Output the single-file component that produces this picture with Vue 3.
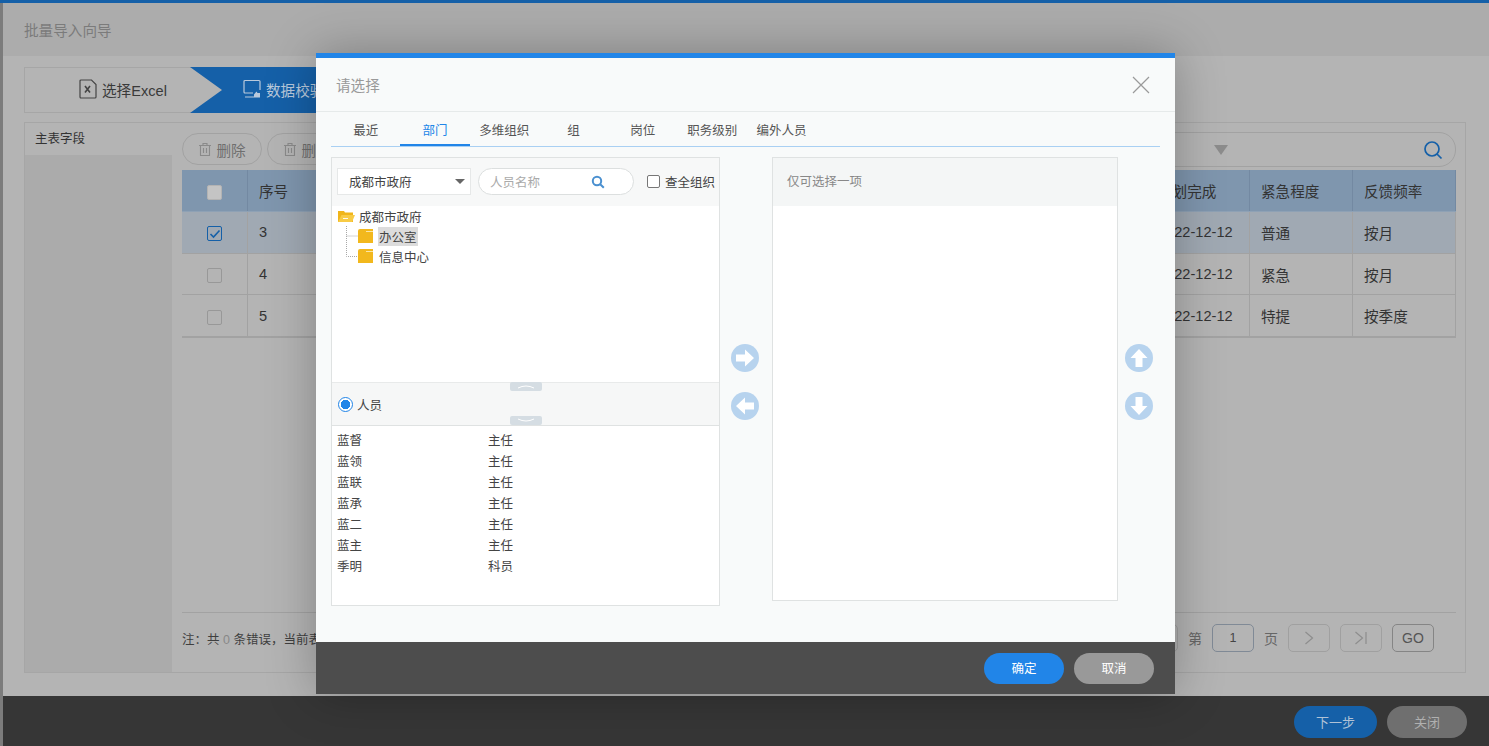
<script setup>
const rows = [
  { id: 3, date: '2022-12-12', level: '普通', freq: '按月', checked: true },
  { id: 4, date: '2022-12-12', level: '紧急', freq: '按月', checked: false },
  { id: 5, date: '2022-12-12', level: '特提', freq: '按季度', checked: false },
]
const tabs = ['最近', '部门', '多维组织', '组', '岗位', '职务级别', '编外人员']
const people = [
  ['蓝督', '主任'],
  ['蓝领', '主任'],
  ['蓝联', '主任'],
  ['蓝承', '主任'],
  ['蓝二', '主任'],
  ['蓝主', '主任'],
  ['季明', '科员'],
]
const noteStart = '注\uFF1A共'
const noteEnd = '条错误\uFF0C当前表单可继续导入'
</script>

<template>
  <div class="page">
    <div class="window">
      <header class="win-head">批量导入向导</header>

      <main class="win-body">
        <div class="steps">
          <div class="step first">
            <svg class="step-icon" width="18" height="20" viewBox="0 0 18 20" fill="none" stroke="#444" stroke-width="1.2">
              <path d="M1 2a1 1 0 0 1 1-1h10.500L17 5.500V18a1 1 0 0 1-1 1H2a1 1 0 0 1-1-1z" />
              <path d="M6 7l5 6.500M11 7l-5 6.500" stroke-width="1.600" />
            </svg>
            <span>选择Excel</span>
          </div>
          <div class="step active">
            <svg class="step-icon" width="18" height="20" viewBox="0 0 18 20" fill="none" stroke="#b9c9dc" stroke-width="1.200">
              <path d="M10 14H2a1 1 0 0 1-1-1V2.500a1 1 0 0 1 1-1h14a1 1 0 0 1 1 1V11" />
              <path d="M2 18h9" />
              <path d="M11 18.500v-3l2.500-3 1 1.500H17v4.500z" fill="#b9c9dc" stroke="none" />
            </svg>
            <span>数据校验</span>
          </div>
        </div>

        <section class="panel">
          <aside class="aside">
            <div class="aside-title">主表字段</div>
            <div class="aside-fill"></div>
          </aside>

          <div class="content">
            <div class="toolbar">
              <button v-for="n in 2" :key="n" class="pill-btn" type="button">
                <svg width="14" height="15" viewBox="0 0 14 15" fill="none" stroke="#8a8a8a" stroke-width="1.1">
                  <path d="M1 3.500h12M5 3.500v-2h4v2M2.500 3.500v10h9v-10M5.500 6v5M8.500 6v5" />
                </svg>
                <span>删除</span>
              </button>
              <div class="search-pill">
                <span class="search-caret"></span>
                <svg width="20" height="20" viewBox="0 0 20 20" fill="none" stroke="#1560a8" stroke-width="1.700">
                  <circle cx="9" cy="9" r="7" />
                  <path d="M14 14l4.500 4.500" />
                </svg>
              </div>
            </div>

            <div class="table">
              <div class="tr head">
                <div class="td check"><span class="box head-box"></span></div>
                <div class="td grow">序号</div>
                <div class="td date">计划完成</div>
                <div class="td level">紧急程度</div>
                <div class="td freq">反馈频率</div>
              </div>
              <div v-for="row in rows" :key="row.id" class="tr body-row" :class="{ picked: row.checked }">
                <div class="td check">
                  <span class="box" :class="{ on: row.checked }">
                    <svg v-if="row.checked" width="12" height="10" viewBox="0 0 12 10" fill="none" stroke="#1560a8" stroke-width="1.600">
                      <path d="M1.500 5l3 3 6-6.500" />
                    </svg>
                  </span>
                </div>
                <div class="td grow">{{ row.id }}</div>
                <div class="td date">{{ row.date }}</div>
                <div class="td level">{{ row.level }}</div>
                <div class="td freq">{{ row.freq }}</div>
              </div>
            </div>

            <div class="table-foot">
              <p class="note">{{ noteStart }} <em>0</em> {{ noteEnd }}</p>
              <div class="pager">
                <span class="page-btn edge"></span>
                <span class="page-label">第</span>
                <span class="page-input">1</span>
                <span class="page-label">页</span>
                <span class="page-btn">
                  <svg width="12" height="14" viewBox="0 0 12 14" fill="none" stroke="#8d8d8d" stroke-width="1.200"><path d="M2.500 1l7 6-7 6" /></svg>
                </span>
                <span class="page-btn">
                  <svg width="14" height="14" viewBox="0 0 14 14" fill="none" stroke="#8d8d8d" stroke-width="1.200"><path d="M1.500 1l7 6-7 6M12 1v12" /></svg>
                </span>
                <span class="page-btn go">GO</span>
              </div>
            </div>
          </div>
        </section>
      </main>

      <footer class="win-foot">
        <button class="foot-btn next" type="button">下一步</button>
        <button class="foot-btn shut" type="button">关闭</button>
      </footer>
    </div>

    <div class="modal">
      <div class="modal-head">
        <span>请选择</span>
        <svg width="18" height="18" viewBox="0 0 18 18" fill="none" stroke="#9a9a9a" stroke-width="1.200">
          <path d="M1 1l16 16M17 1L1 17" />
        </svg>
      </div>

      <div class="tabs">
        <span v-for="tab in tabs" :key="tab" class="tab" :class="{ current: tab === '部门' }">{{ tab }}</span>
      </div>

      <div class="modal-body">
        <div class="picker">
          <div class="picker-top">
            <div class="select">
              <span>成都市政府</span>
              <i class="caret"></i>
            </div>
            <div class="name-input">
              <span>人员名称</span>
              <svg width="14" height="14" viewBox="0 0 14 14" fill="none" stroke="#4a90d0" stroke-width="2">
                <circle cx="6" cy="6" r="4.200" />
                <path d="M9.200 9.200l3.600 3.600" />
              </svg>
            </div>
            <label class="all-org"><span class="mini-box"></span>查全组织</label>
          </div>

          <div class="tree">
            <div class="node">
              <svg width="17" height="13" viewBox="0 0 17 13">
                <path d="M0 1h6l1 1.500h8V12H0z" fill="#f0b51a" />
                <path d="M3.500 5H17l-3 7H0z" fill="#f8cb45" />
                <path d="M5 8.500h5" stroke="#fff" stroke-width="0.900" />
              </svg>
              <span>成都市政府</span>
            </div>
            <div class="node child">
              <svg class="link" width="12" height="20" viewBox="0 0 12 20" fill="none" stroke="#a8a8a8" stroke-dasharray="1 1">
                <path d="M.5 0v20M.5 10H12" />
              </svg>
              <svg width="15" height="14" viewBox="0 0 15 14">
                <path d="M0 2a2 2 0 0 1 2-2h13v14H0z" fill="#f2b81d" />
                <path d="M8 2.500h7" stroke="#fbe6a8" stroke-width="1" />
              </svg>
              <span class="label chosen">办公室</span>
            </div>
            <div class="node child">
              <svg class="link" width="12" height="20" viewBox="0 0 12 20" fill="none" stroke="#a8a8a8" stroke-dasharray="1 1">
                <path d="M.5 0v10.500H12" />
              </svg>
              <svg width="15" height="14" viewBox="0 0 15 14">
                <path d="M0 2a2 2 0 0 1 2-2h13v14H0z" fill="#f2b81d" />
                <path d="M8 2.500h7" stroke="#fbe6a8" stroke-width="1" />
              </svg>
              <span class="label">信息中心</span>
            </div>
          </div>

          <div class="radio-bar">
            <span class="grip top">
              <svg width="32" height="9" viewBox="0 0 32 9" fill="none" stroke="#fff"><path d="M8 6q8-4 16 0" /></svg>
            </span>
            <span class="radio"></span>
            <span>人员</span>
            <span class="grip bottom">
              <svg width="32" height="9" viewBox="0 0 32 9" fill="none" stroke="#fff"><path d="M8 3q8 4 16 0" /></svg>
            </span>
          </div>

          <div class="people">
            <div v-for="p in people" :key="p[0]" class="person">
              <span class="person-name">{{ p[0] }}</span>
              <span>{{ p[1] }}</span>
            </div>
          </div>
        </div>

        <div class="arrows mid">
          <svg class="arrow" width="28" height="28" viewBox="0 0 28 28"><circle cx="14" cy="14" r="14" fill="#b7d3ee" /><path d="M5 10.500h9v-5l9 8.500-9 8.500v-5H5z" fill="#fff" /></svg>
          <svg class="arrow to-left" width="28" height="28" viewBox="0 0 28 28"><circle cx="14" cy="14" r="14" fill="#b7d3ee" /><path d="M5 10.500h9v-5l9 8.500-9 8.500v-5H5z" fill="#fff" /></svg>
        </div>

        <div class="chosen-panel">
          <div class="chosen-head">仅可选择一项</div>
        </div>

        <div class="arrows side">
          <svg class="arrow to-up" width="28" height="28" viewBox="0 0 28 28"><circle cx="14" cy="14" r="14" fill="#b7d3ee" /><path d="M5 10.500h9v-5l9 8.500-9 8.500v-5H5z" fill="#fff" /></svg>
          <svg class="arrow to-down" width="28" height="28" viewBox="0 0 28 28"><circle cx="14" cy="14" r="14" fill="#b7d3ee" /><path d="M5 10.500h9v-5l9 8.500-9 8.500v-5H5z" fill="#fff" /></svg>
        </div>
      </div>

      <div class="modal-foot">
        <button class="modal-btn ok" type="button">确定</button>
        <button class="modal-btn cancel" type="button">取消</button>
      </div>
    </div>
  </div>
</template>

<style>
html,
body {
  margin: 0;
  background: #7c7c7c;
  overflow: hidden;
}
</style>

<style scoped>
.page {
  position: relative;
  width: 1489px;
  height: 746px;
  overflow: hidden;
  box-sizing: border-box;
  padding-left: 3px;
  border-top: 3px solid #1560a8;
  font-family: "Liberation Sans", "Noto Sans CJK SC", sans-serif;
  font-size: 14.6px;
  color: #333;
}

.window {
  display: flex;
  flex-direction: column;
  height: 743px;
  background: #b4b4b4;
}

.win-head {
  flex: none;
  height: 53px;
  box-sizing: border-box;
  padding: 18px 0 0 21px;
  background: #acacac;
  color: #7b7b7b;
  line-height: 20px;
}

.win-body {
  flex: 1;
  display: flex;
  flex-direction: column;
  padding: 11px 23px 23px 21px;
  min-height: 0;
}

.steps {
  flex: none;
  display: flex;
  height: 46px;
}

.step {
  display: flex;
  align-items: center;
  box-sizing: border-box;
  height: 46px;
  padding-bottom: 2px;
}

.step.first {
  flex: none;
  width: 198px;
  padding-left: 54px;
  border: 1px solid #a6a6a6;
  border-right: 0;
  color: #3a3a3a;
}

.step.active {
  flex: none;
  width: 500px;
  margin-left: -32px;
  padding-left: 53px;
  background: #1560a8;
  color: #b9c9dc;
  clip-path: polygon(0 0, 100% 0, 100% 100%, 0 100%, 32px 50%);
}

.step-icon {
  flex: none;
  margin-right: 5px;
}

.panel {
  flex: 1;
  display: flex;
  margin-top: 9px;
  border: 1px solid #a6a6a6;
  min-height: 0;
}

.aside {
  flex: none;
  display: flex;
  flex-direction: column;
  width: 147px;
}

.aside-title {
  flex: none;
  height: 32px;
  box-sizing: border-box;
  padding: 7px 0 0 10px;
  font-size: 12.5px;
  line-height: 18px;
}

.aside-fill {
  flex: 1;
  background: #ababab;
}

.content {
  flex: 1;
  display: flex;
  flex-direction: column;
  min-width: 0;
  padding: 10px 9px 0 10px;
}

.toolbar {
  flex: none;
  display: flex;
  gap: 5px;
  height: 32px;
}

.pill-btn {
  display: flex;
  align-items: center;
  justify-content: center;
  gap: 4px;
  width: 80px;
  height: 32px;
  padding: 0;
  border: 1px solid #a2a2a2;
  border-radius: 16px;
  background: transparent;
  color: #6f6f6f;
  font: inherit;
}

.search-pill {
  flex: 1;
  display: flex;
  align-items: center;
  justify-content: flex-end;
  gap: 195px;
  height: 33px;
  margin-top: -1px;
  margin-left: 40px;
  padding-right: 12px;
  border: 1px solid #a2a2a2;
  border-radius: 17px;
}

.search-caret {
  width: 0;
  height: 0;
  border-left: 7px solid transparent;
  border-right: 7px solid transparent;
  border-top: 10px solid #8c8c8c;
}

.table {
  flex: none;
  margin-top: 5px;
  border-bottom: 1px solid #a2a2a2;
}

.tr {
  display: flex;
  height: 42px;
  border-bottom: 1px solid #a2a2a2;
  box-sizing: border-box;
}

.tr.body-row {
  height: 41.7px;
}

.tr.head {
  background: #7f96ae;
  border-bottom-color: #8ea1b5;
}

.tr.picked {
  background: #a0a9b3;
}

.td {
  display: flex;
  align-items: center;
  box-sizing: border-box;
  padding-left: 11px;
  border-right: 1px solid #a2a2a2;
  color: #333;
}

.tr.head .td {
  border-right-color: #7389a2;
}

.td.check {
  flex: none;
  width: 66px;
  justify-content: center;
  padding: 0;
}

.td.grow {
  flex: 1;
}

.td.date {
  flex: none;
  width: 102px;
  padding-left: 10px;
}

.td.level,
.td.freq {
  flex: none;
  width: 103px;
}

.box {
  display: flex;
  align-items: center;
  justify-content: center;
  box-sizing: border-box;
  width: 15px;
  height: 15px;
  margin-top: 3px;
  border: 1px solid #989898;
  border-radius: 2px;
}

.box.head-box {
  margin-top: 4px;
  background: #c4c4c4;
  border-color: #b3b3b3;
}

.box.on {
  border-color: #1560a8;
}

.table-foot {
  flex: none;
  display: flex;
  align-items: center;
  justify-content: space-between;
  height: 50px;
  margin-top: 274px;
  border-top: 1px solid #a2a2a2;
}

.note {
  margin: 0;
  font-size: 12.5px;
  color: #3f3f3f;
}

.note em {
  font-style: normal;
  color: #888;
}

.pager {
  display: flex;
  align-items: center;
  gap: 10px;
  padding-right: 22px;
  font-size: 13px;
}

.page-label {
  color: #666;
  font-size: 14px;
}

.page-input,
.page-btn {
  display: flex;
  align-items: center;
  justify-content: center;
  box-sizing: border-box;
  width: 42px;
  height: 28px;
  border: 1px solid #a0a0a0;
  border-radius: 5px;
}

.page-input {
  border-color: #808a96;
  color: #444;
  font-size: 12.5px;
}

.page-btn.go {
  border-color: #858585;
  color: #555;
  font-size: 14px;
}

.win-foot {
  flex: none;
  display: flex;
  justify-content: flex-end;
  gap: 10px;
  height: 50px;
  box-sizing: border-box;
  padding: 10px 22px 0 0;
  background: #363636;
}

.foot-btn {
  height: 32px;
  padding: 0 0 2px;
  border: 0;
  border-radius: 16px;
  font: inherit;
  font-size: 13px;
}

.foot-btn.next {
  width: 83px;
  background: #1560a8;
  color: #b0c2d6;
}

.foot-btn.shut {
  width: 80px;
  background: #6f6f6f;
  color: #b0b0b0;
}

/* dialog sits over the wizard */
.modal {
  position: absolute;
  left: 316px;
  top: 50px;
  display: flex;
  flex-direction: column;
  width: 859px;
  height: 641px;
  background: #f8fafa;
  border-top: 5px solid #2185e8;
  box-sizing: border-box;
  box-shadow: 0 0 46px rgba(0, 0, 0, 0.28);
  font-size: 12.5px;
  color: #444;
}

.modal-head {
  flex: none;
  display: flex;
  align-items: center;
  justify-content: space-between;
  height: 54px;
  box-sizing: border-box;
  padding: 0 25px 0 20px;
  border-bottom: 1px solid #e6eaea;
  color: #999;
  font-size: 14.6px;
}

.tabs {
  flex: none;
  display: flex;
  height: 35px;
  margin: 0 15px;
  box-sizing: border-box;
  border-bottom: 1px solid #a9d0f3;
}

.tab {
  flex: none;
  width: 69.3px;
  text-align: center;
  line-height: 38px;
  color: #555;
}

.tab.current {
  height: 34px;
  box-sizing: border-box;
  color: #2185e8;
  border-bottom: 2px solid #2185e8;
}

.modal-body {
  flex: 1;
  display: flex;
  align-items: flex-start;
  padding: 10px 15px 0;
  min-height: 0;
}

.picker {
  flex: none;
  display: flex;
  flex-direction: column;
  width: 389px;
  height: 449px;
  box-sizing: border-box;
  border: 1px solid #dfe2e2;
  background: #fff;
}

.picker-top {
  flex: none;
  display: flex;
  align-items: flex-start;
  height: 48px;
  box-sizing: border-box;
  padding: 10px 0 0 5px;
  background: #f7f8f8;
}

.select {
  display: flex;
  align-items: center;
  justify-content: space-between;
  width: 134px;
  height: 27px;
  box-sizing: border-box;
  padding: 0 5px 0 11px;
  background: #fff;
  border: 1px solid #e6e8e8;
}

.caret {
  width: 0;
  height: 0;
  border-left: 5px solid transparent;
  border-right: 5px solid transparent;
  border-top: 5px solid #666;
}

.name-input {
  display: flex;
  align-items: center;
  justify-content: space-between;
  width: 156px;
  height: 27px;
  margin-left: 7px;
  box-sizing: border-box;
  padding: 0 28px 0 11px;
  background: #fff;
  border: 1px solid #dcdfdf;
  border-radius: 14px;
  color: #aaa;
}

.all-org {
  display: flex;
  align-items: center;
  height: 27px;
  margin-left: 13px;
  white-space: nowrap;
}

.mini-box {
  width: 13px;
  height: 13px;
  margin-right: 5px;
  box-sizing: border-box;
  border: 1px solid #777;
  border-radius: 2px;
  background: #fff;
}

.tree {
  flex: none;
  height: 176px;
  box-sizing: border-box;
  padding: 0 0 0 6px;
}

.node {
  display: flex;
  align-items: center;
  height: 20px;
  gap: 4px;
}

.node.child {
  padding-left: 8px;
  gap: 5px;
}

.link {
  margin-right: -5px;
  flex: none;
}

.label {
  padding: 0 1px;
}

.chosen {
  background: #dcdcdc;
}

.radio-bar {
  position: relative;
  flex: none;
  display: flex;
  align-items: center;
  gap: 4px;
  height: 44px;
  box-sizing: border-box;
  padding-left: 6px;
  background: #f6f7f7;
  border-top: 1px solid #e8eaea;
  border-bottom: 1px solid #dfe2e2;
}

.radio {
  width: 15px;
  height: 15px;
  box-sizing: border-box;
  border: 1.5px solid #2185e8;
  border-radius: 50%;
  background: radial-gradient(circle, #2185e8 0 4.5px, #fff 5px);
}

.grip {
  position: absolute;
  left: 178px;
  display: flex;
  width: 32px;
  height: 9px;
  background: #d5dde3;
  border-radius: 2px;
}

.grip.top {
  top: -1px;
}

.grip.bottom {
  bottom: 0;
}

.people {
  flex: 1;
  padding: 5px 0 0 5px;
}

.person {
  display: flex;
  height: 21px;
  line-height: 21px;
}

.person-name {
  width: 151px;
}

.arrows {
  flex: none;
  display: flex;
  flex-direction: column;
  align-items: center;
  gap: 20px;
  padding-top: 187px;
}

.arrows.mid {
  width: 50px;
  margin-right: 2px;
}

.arrows.side {
  width: 42px;
}

.arrow {
  display: block;
}

.arrow.to-left {
  transform: rotate(180deg);
}

.arrow.to-up {
  transform: rotate(-90deg);
}

.arrow.to-down {
  transform: rotate(90deg);
}

.chosen-panel {
  flex: none;
  width: 346px;
  height: 444px;
  box-sizing: border-box;
  border: 1px solid #dfe2e2;
  background: #fff;
}

.chosen-head {
  height: 48px;
  box-sizing: border-box;
  padding: 15px 0 0 14px;
  line-height: 18px;
  background: #f4f6f6;
  color: #888;
}

.modal-foot {
  flex: none;
  display: flex;
  justify-content: flex-end;
  gap: 10px;
  height: 52px;
  box-sizing: border-box;
  padding: 11px 21px 0 0;
  background: #4d4d4d;
}

.modal-btn {
  width: 80px;
  height: 31px;
  padding: 0 0 2px;
  border: 0;
  border-radius: 16px;
  color: #fff;
  font: inherit;
}

.modal-btn.ok {
  background: #2185e8;
}

.modal-btn.cancel {
  background: #999;
}
</style>
